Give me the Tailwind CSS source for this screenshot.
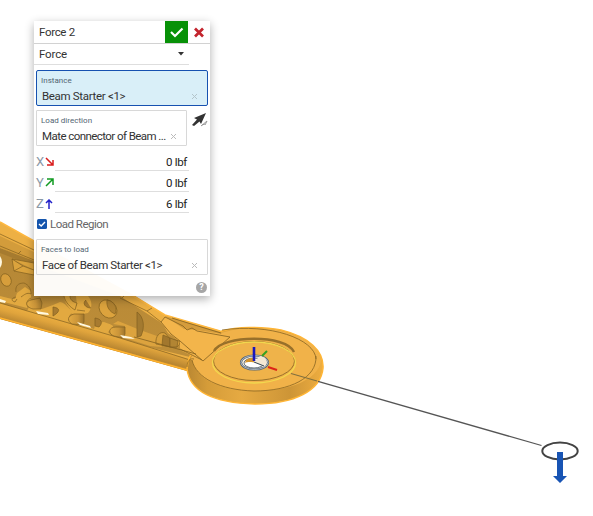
<!DOCTYPE html>
<html lang="en">
<head>
<meta charset="utf-8">
<title>Force 2</title>
<script src="https://cdn.jsdelivr.net/npm/@tailwindcss/browser@4"></script>
</head>
<body class="bg-white">
<main class="relative w-[593px] h-[516px] overflow-hidden bg-white font-[Roboto,sans-serif] text-[#333]">
<svg class="block" width="593" height="516" viewBox="0 0 593 516" fill="none">
  <defs>
    <linearGradient id="beam" x1="60" y1="318" x2="55" y2="337" gradientUnits="userSpaceOnUse"><stop stop-color="#edb042"/><stop offset=".35" stop-color="#e0a43c"/><stop offset=".8" stop-color="#b98631"/><stop offset="1" stop-color="#d3982f"/></linearGradient>
    <linearGradient id="web" x1="0" y1="260" x2="0" y2="340" gradientUnits="userSpaceOnUse"><stop stop-color="#b68836"/><stop offset="1" stop-color="#bd8d38"/></linearGradient>
    <linearGradient id="pocket" x1="0" y1="0" x2="1" y2="0"><stop stop-color="#e3aa42"/><stop offset=".6" stop-color="#cb9539"/><stop offset="1" stop-color="#9f762d"/></linearGradient>
    <linearGradient id="rim" x1="187" y1="0" x2="324" y2="0" gradientUnits="userSpaceOnUse"><stop stop-color="#b98732"/><stop offset=".15" stop-color="#d59c39"/><stop offset=".4" stop-color="#e6aa42"/><stop offset=".75" stop-color="#cd9537"/><stop offset="1" stop-color="#efae40"/></linearGradient>
  </defs>
  <!-- beam -->
  <path d="M0 222L34 241L132 294L165 315L225 332V375L187 371L130 355L0 319Z" fill="#edb044"/>
  <path d="M0 251L34 264L120 296L160 322L194 358L120 340L0 304Z" fill="url(#web)"/>
  <path d="M0 236L34 252V262L0 248Z" fill="#d39c3b"/>
  <path d="M0 248L34 261V266L0 253Z" fill="#a67b2f"/>
  <path d="M0 303L120 338L192 360L187 371L130 355L0 319Z" fill="url(#beam)"/>
  <path d="M0 222L34 241M132 295L165 315L220 331" stroke="#ffb83f" stroke-width="1.5"/>
  <path d="M0 318L130 354L187 370" stroke="#ffb22f" stroke-width="1.6"/>
  <!-- web lattice -->
  <path d="M15 299L17 293L25 287L31 291V298L29 304L27 308L0 301V296L12 299Z" fill="#e2a940"/>
  <path d="M42 309L53 305L60 302C66 303 68 309 73 311L69 316L72 322L94 329L96 323L104 322C112 325 113 325 113 327L108 332L113 337L27 311L30 305Z" fill="#e2a940"/>
  <path d="M64 296C64 301 68 307 72 311L69 313L77 315L88 313C93 308 92 300 88 296L76 296L77 306C73 305 70 301 70 296Z" fill="#e2a940"/>
  <path d="M113 324L118 321L140 330L157 336L162 347L150 346L125 338V326Z" fill="#dca33e"/>
  <g stroke="#82601f" stroke-width=".7">
    <path d="M0 234L34 250M0 246L34 260M18 254L21 251M0 303L120 338L190 360M120 298L147 311L161 322M122 298L124 296M147 311L152 308"/>
    <path d="M12 259L34 263V275L14 271ZM12 259L23 266L34 270M23 266L14 271" fill="#dba33d"/>
    <path d="M137 312C144 317 145 327 141 336L137 337Z" fill="#a37a30"/>
    <ellipse cx="6" cy="280" rx="5" ry="6.500" transform="rotate(-25 6 280)" fill="#d79e3b"/>
    <path d="M16 292C15 286 18 283 24 283C29 285 31 289 31 294C27 292 24 295 21 297" />
    <path d="M16 297C11 298 11 301 15 302L17 299M31 298C27 300 26 303 28 307"/>
    <path d="M41 309H33C25 307 25 301 31 300L40 298L42 303Z" fill="url(#pocket)"/>
    <path d="M64 296C65 302 70 307 75 310L77 303C73 302 70 300 70 296" fill="#e2a940"/>
    <path d="M77 310L85 311M86 300C82 303 85 308 91 308M53 307C61 308 60 312 53 316Z" fill="#a87b30"/>
    <path d="M84 314H74C67 316 67 321 72 324L82 325L84 322Z" fill="url(#pocket)"/>
    <ellipse cx="108" cy="309" rx="10" ry="8" transform="rotate(47 108 309)" fill="#dca33d"/>
    <path d="M107 300C114 301 118 308 115 314C110 312 106 307 107 300Z" fill="#b08231"/>
    <path d="M95 318C102 319 103 323 99 327L95 326Z" fill="#a87b30"/>
    <path d="M125 327H116C108 327 108 334 114 336L123 338L125 334Z" fill="url(#pocket)"/>
    <path d="M156 344C155 336 160 331 165 333L170 339L180 341C180 346 177 348 171 347Z" fill="#d8a03c"/>
    <path d="M163 335L170 338V347L162 345Z" fill="#a2772d"/><path d="M170 338L178 341L177 347L170 347Z" fill="#b28533"/>
  </g>
  <g fill="#fff8df"><path d="M0 256Q4 262 0 268Z"/><path d="M0 299L6 301L5 303L0 302ZM36 311L48 313L49 315L38 314ZM77 322L90 326L91 328L80 325ZM120 335L131 337L135 339L123 338Z"/></g>

  <!-- end disc -->
  <path d="M187 369C187 359 193 350 200 344C205 336 215 333 222 331C236 327 262 326 281 330C309 337 324 351 323 368C321 391 294 404 255 404C217 403 190 393 187 369Z" fill="url(#rim)" stroke="#ffb535" stroke-width="1.5"/>
  <path d="M190 360C199 340 221 328 255 328C293 329 320 343 321 361C318 380 289 391 256 391C220 391 196 379 192 360Z" fill="#f1b249"/>
  <path d="M316 356C317 378 290 391 254 391C220 390 196 378 192 360M222 330C270 323 315 339 316 359M187 367C187 361 190 358 194 359" stroke="#886522" stroke-width=".8"/>
  <path d="M161 321L165 317L232 337L203 361L180 350V341L168 333Z" fill="#f3b54b"/>
  <path d="M165 316L182 321L220 332L222 334L197 330L184 329Z" fill="#d49c3c"/>
  <path d="M165 317L183 326L187 330L192 328L197 331L230 337L203 361L180 341L171 334L161 322ZM172 318L188 323L221 333M202 360L180 349M134 337L196 354" stroke="#82601f" stroke-width=".8"/>
  <path d="M214 351C222 335 286 334 294 352" stroke="#98702a" stroke-width="2.400"/>
  <ellipse cx="254" cy="361" rx="40.500" ry="19.500" fill="#efb34a" stroke="#8e6b27" stroke-width=".9"/>
  <ellipse cx="254" cy="362.500" rx="41.500" ry="20.500" stroke="#f2d84e" stroke-width="1.300"/>
  <ellipse cx="254.500" cy="362.500" rx="13.500" ry="7" fill="#f7efdf" stroke="#526375" stroke-width="2.200"/>
  <ellipse cx="254.500" cy="362.500" rx="13.500" ry="7" stroke="#e7edf1" stroke-width=".6"/>
  <ellipse cx="254" cy="363" rx="10" ry="5" fill="#fff" stroke="#65717c"/>
  <path d="M245 363C246 358 250 358 254 358V362L259 365C254 361 247 362 245 363Z" fill="#d5942c"/>
  <path d="M254 362L260 356C267 357 269 363 264 367Z" fill="#f4e8d4"/><path d="M254 362L264 366" stroke="#334556"/>
  <path d="M254 347V361" stroke="#1916bc" stroke-width="2.600"/>
  <path d="M262 356L267 351" stroke="#34a122" stroke-width="2"/><path d="M268 367L277 370" stroke="#dc2418" stroke-width="2"/>
  <path d="M291 373.500L317 381" stroke="#80703f" stroke-width="1.200"/>
  <path d="M318 381.300L541.500 445.500" stroke="#555" stroke-width="1.300"/>
  <!-- load arrow -->
  <ellipse cx="560" cy="451" rx="17.700" ry="8.400" stroke="#434343" stroke-width="2"/>
  <path d="M557 452H563V476H567L560 483L553 476H557Z" fill="#1854b4"/>
</svg>

<section class="absolute left-[34px] top-[21px] w-[176px] h-[275px] bg-white/96 shadow-[0_3px_9px_rgba(0,0,0,.32)] text-[11.5px] tracking-[-0.32px]">
  <header class="flex h-[23px] border-b border-[#d2d2d2] bg-white">
    <h1 class="flex-1 pl-[5px] leading-[23px]">Force 2</h1>
    <button aria-label="Accept" class="w-[23px] h-[22px] bg-[#079107]"><svg width="23" height="22" viewBox="0 0 23 22" fill="none"><path d="M6 11L10 15L17.500 7.500" stroke="#fff" stroke-width="2.200"/></svg></button>
    <button aria-label="Cancel" class="w-[22px] h-[22px]"><svg width="22" height="22" viewBox="0 0 22 22"><path d="M7 7.500L15 15.500M15 7.500L7 15.500" stroke="#c3242d" stroke-width="2.700"/></svg></button>
  </header>
  <div class="flex items-center justify-between w-[155px] h-[21px] px-[5px] border-b border-[#dedede]"><span class="pt-[2px] tracking-[-0.15px]">Force</span><svg width="6" height="4"><path d="M0 0H6L3 3.500Z" fill="#333"/></svg></div>

  <div class="mt-[5px] ml-[2px] w-[172px] h-[36px] border border-[#1651b0] rounded-[2px] bg-[#d9eff8]">
    <div class="pl-1 pt-[4px] text-[8px] leading-[11px] text-[#526572] tracking-[0.02px]">Instance</div>
    <div class="flex items-center justify-between pl-[5px] pr-[9px] h-[20px]"><span class="pt-[2px]">Beam Starter &lt;1&gt;</span><svg width="7" height="7"><path d="M1 1L6 6M6 1L1 6" stroke="#b4c5cb"/></svg></div>
  </div>

  <div class="flex mt-[4px] ml-[2px]">
    <div class="w-[151px] h-[36px] border border-[#d8d8d8] rounded-[1px]">
      <div class="pl-1 pt-[4px] text-[8px] leading-[11px] text-[#526572] tracking-[0.02px]">Load direction</div>
      <div class="flex items-center justify-between pl-[5px] pr-[9px] h-[20px] whitespace-nowrap"><span class="pt-[2px] tracking-[-0.56px]">Mate connector of Beam ...</span><svg class="shrink-0" width="7" height="7"><path d="M1 1L6 6M6 1L1 6" stroke="#bbb"/></svg></div>
    </div>
    <svg class="ml-[4px] mt-[1px]" width="17" height="18" viewBox="0 0 17 18"><path d="M15 2L3 7L6 8.500L1 14L3 15L8.500 10.500L10 13Z" fill="#333"/><path d="M10 15L16 10L14 14M11 14L14 13" stroke="#999" fill="none"/></svg>
  </div>

  <div class="mt-[4px] pl-[2px]">
    <div class="flex h-[21px]"><span class="w-[8px] text-[13px] leading-[23px] text-[#8b98a5]">X</span><svg class="mt-[7px] ml-px" width="10" height="10"><path d="M1 1L8 8M8 3V8H2" stroke="#d91c1c" stroke-width="1.500" fill="none"/></svg><span class="w-[134px] border-b border-[#dedede] text-right pr-[2px] leading-[24px] text-[#222]">0 lbf</span></div>
    <div class="flex h-[21px]"><span class="w-[8px] text-[13px] leading-[23px] text-[#8b98a5]">Y</span><svg class="mt-[7px] ml-px" width="10" height="10"><path d="M1 8L8 1M2 1H8V7" stroke="#119b22" stroke-width="1.500" fill="none"/></svg><span class="w-[134px] border-b border-[#dedede] text-right pr-[2px] leading-[24px] text-[#222]">0 lbf</span></div>
    <div class="flex h-[21px]"><span class="w-[8px] text-[13px] leading-[23px] text-[#8b98a5]">Z</span><svg class="mt-[7px] ml-px" width="10" height="10"><path d="M4 10V1M1 4L4 1L7 4" stroke="#2020c9" stroke-width="1.500" fill="none"/></svg><span class="w-[134px] border-b border-[#dedede] text-right pr-[2px] leading-[24px] text-[#222]">6 lbf</span></div>
  </div>

  <div class="flex items-center h-[22px] pl-[3px] text-[#666]"><svg width="10" height="10"><rect width="10" height="10" rx="1.500" fill="#1555ad"/><path d="M2 5L4.200 7L8 3" stroke="#fff" stroke-width="1.400" fill="none"/></svg><span class="ml-[3px] pt-[2px] tracking-[-0.5px]">Load Region</span></div>

  <div class="mt-[4px] ml-[2px] w-[172px] h-[36px] border border-[#d8d8d8] rounded-[1px]">
    <div class="pl-1 pt-[4px] text-[8px] leading-[11px] text-[#526572] tracking-[0.02px]">Faces to load</div>
    <div class="flex items-center justify-between pl-[5px] pr-[9px] h-[20px]"><span class="pt-px tracking-[-0.38px]">Face of Beam Starter &lt;1&gt;</span><svg width="7" height="7"><path d="M1 1L6 6M6 1L1 6" stroke="#bbb"/></svg></div>
  </div>
  <div class="flex justify-end pr-[3px] pt-[7px]"><span class="w-[11px] h-[11px] rounded-full bg-[#a6a6a6] text-white text-[9px] font-bold leading-[11px] text-center tracking-normal">?</span></div>
</section>
</main>
</body>
</html>
